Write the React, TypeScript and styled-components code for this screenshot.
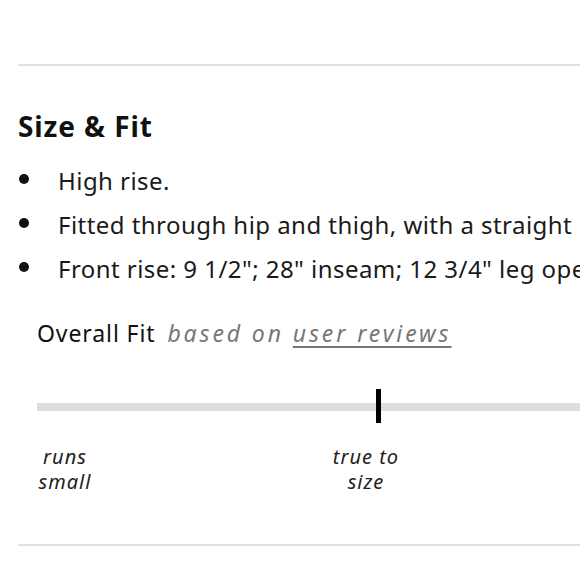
import React from "react";
import styled, { createGlobalStyle } from "styled-components";

const GlobalStyle = createGlobalStyle`
  html, body {
    margin: 0;
    padding: 0;
    background: #ffffff;
    overflow: hidden;
  }
  body {
    font-family: "Noto Sans", "Open Sans", "Liberation Sans", sans-serif;
    color: #1a1a1a;
  }
`;

const Page = styled.div`
  width: 820px;
  padding: 64px 0 0 18px;
  box-sizing: border-box;
`;

const Rule = styled.hr`
  margin: 0;
  border: 0;
  height: 2px;
  background: #e2e2e2;
`;

const Heading = styled.h2`
  margin: 44px 0 0;
  font-size: 28px;
  line-height: 32px;
  font-weight: 700;
  letter-spacing: 0.9px;
  color: #111;
`;

const List = styled.ul`
  list-style: none;
  margin: 17px 0 0;
  padding: 0;
`;

const Item = styled.li`
  display: flex;
  white-space: nowrap;
  font-size: 24px;
  line-height: 44px;
  letter-spacing: 0.45px;
  color: #1a1a1a;

  &::before {
    content: "";
    flex: 0 0 10px;
    width: 10px;
    height: 10px;
    margin: 15px 29px 0 1px;
    border-radius: 50%;
    background: #111;
  }
`;

const FitBlock = styled.div`
  margin: 27px 0 0 19px;
  width: 658px;
`;

const FitTitle = styled.div`
  font-size: 23px;
  line-height: 30px;
  letter-spacing: 0.9px;
  color: #111;
  white-space: nowrap;
`;

const Note = styled.span`
  margin-left: 5px;
  font-style: italic;
  color: #777;
  letter-spacing: 2.9px;
`;

const NoteLink = styled.a`
  color: #777;
  text-decoration: underline;
  text-decoration-thickness: 1.5px;
  text-underline-offset: 4px;
`;

const Slider = styled.div`
  position: relative;
  height: 34px;
  margin-top: 41px;
  padding-top: 14px;
  box-sizing: border-box;
`;

const Track = styled.div`
  height: 8px;
  background: #dddddd;
`;

const Marker = styled.div`
  position: absolute;
  top: 0;
  width: 5px;
  height: 34px;
  margin-left: -2px;
  background: #000;
`;

const Labels = styled.div`
  display: grid;
  grid-template-columns: 56px 1fr 56px;
  margin-top: 21px;
`;

const Label = styled.div`
  text-align: center;
  font-size: 20px;
  line-height: 25px;
  letter-spacing: 1px;
  font-style: italic;
  color: #222;
  white-space: nowrap;
  display: flex;
  flex-direction: column;
  align-items: center;
`;

const BottomRule = styled(Rule)`
  margin-top: 50px;
`;

const bullets = [
  "High rise.",
  "Fitted through hip and thigh, with a straight leg.",
  "Front rise: 9 1/2\"; 28\" inseam; 12 3/4\" leg opening.",
];

const fitValue = 0.518;

export default function App() {
  return (
    <Page>
      <GlobalStyle />
      <Rule />
      <Heading>Size &amp; Fit</Heading>
      <List>
        {bullets.map((b) => (
          <Item key={b}>{b}</Item>
        ))}
      </List>
      <FitBlock>
        <FitTitle>
          Overall Fit{" "}
          <Note>
            based on <NoteLink href="#">user reviews</NoteLink>
          </Note>
        </FitTitle>
        <Slider>
          <Track />
          <Marker style={{ left: `${fitValue * 100}%` }} />
        </Slider>
        <Labels>
          <Label>
            <span>runs</span>
            <span>small</span>
          </Label>
          <Label>
            <span>true to</span>
            <span>size</span>
          </Label>
        </Labels>
      </FitBlock>
      <BottomRule />
    </Page>
  );
}
